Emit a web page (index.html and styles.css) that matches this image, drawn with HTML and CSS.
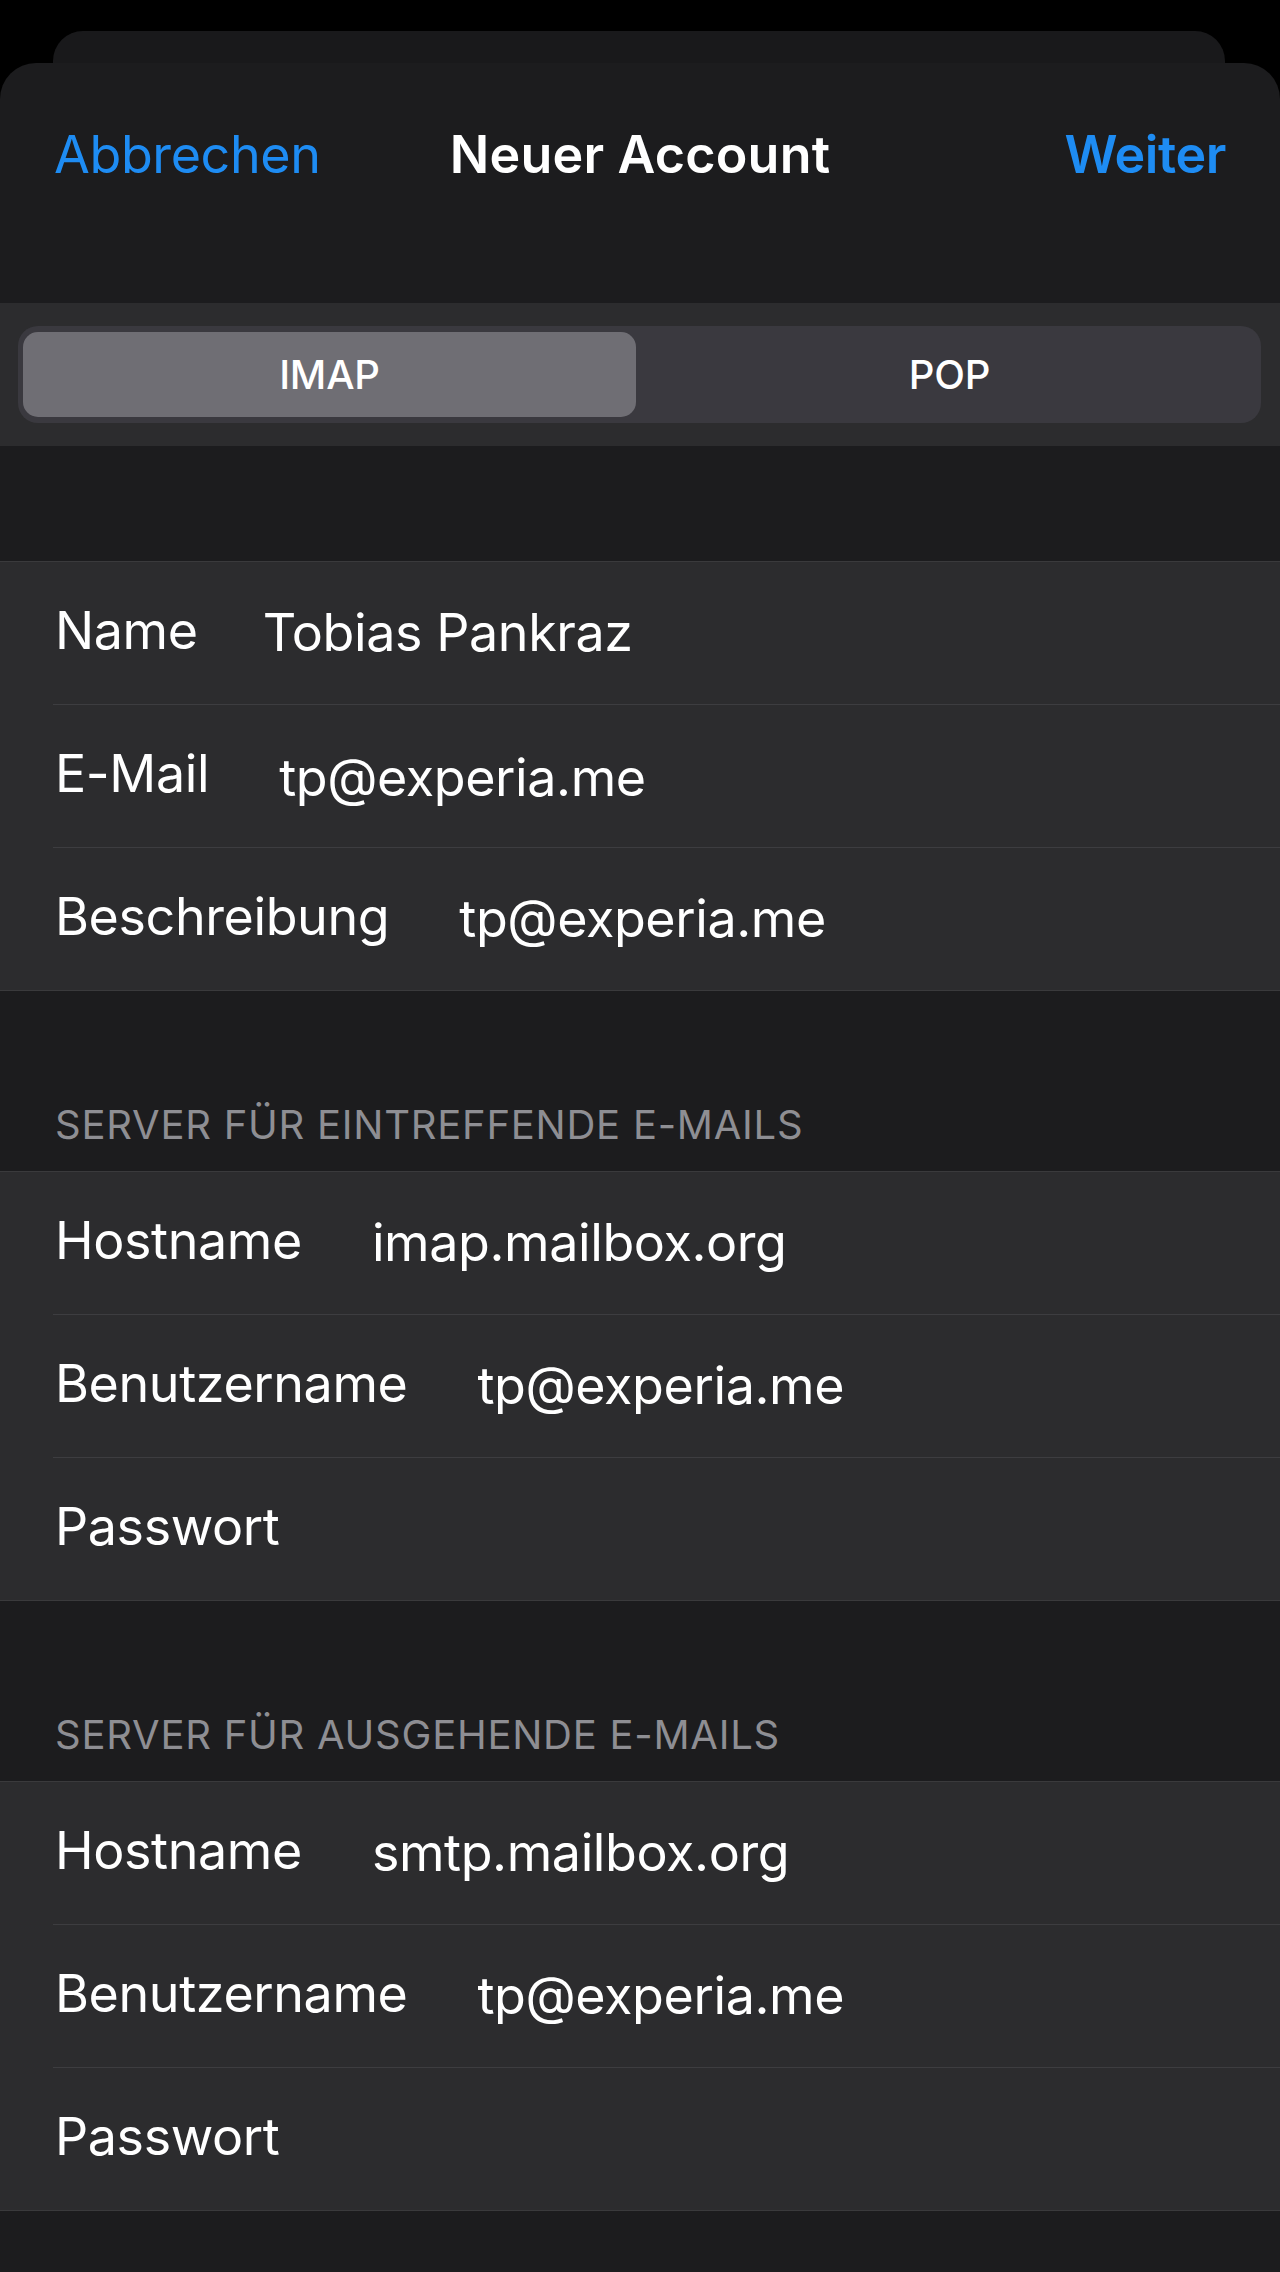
FILE: index.html
```html
<!DOCTYPE html>
<html lang="de">
<head>
<meta charset="utf-8">
<title>Neuer Account</title>
<link rel="stylesheet" href="styles.css">
</head>
<body>
<div class="back-card"></div>
<div class="sheet">
  <div class="nav">
    <span class="nav-btn left">Abbrechen</span>
    <span class="nav-title">Neuer Account</span>
    <span class="nav-btn strong right">Weiter</span>
  </div>
  <div class="seg-band">
    <div class="seg">
      <div class="seg-item selected">IMAP</div>
      <div class="seg-item">POP</div>
    </div>
  </div>
  <div class="spacer"></div>
  <div class="group">
    <div class="row"><span class="label">Name</span><span class="value name">Tobias Pankraz</span></div>
    <div class="row"><span class="label">E-Mail</span><span class="value low">tp@experia.me</span></div>
    <div class="row"><span class="label">Beschreibung</span><span class="value">tp@experia.me</span></div>
  </div>
  <div class="section-header">SERVER FÜR EINTREFFENDE E-MAILS</div>
  <div class="group">
    <div class="row"><span class="label">Hostname</span><span class="value">imap.mailbox.org</span></div>
    <div class="row"><span class="label">Benutzername</span><span class="value">tp@experia.me</span></div>
    <div class="row"><span class="label">Passwort</span></div>
  </div>
  <div class="section-header">SERVER FÜR AUSGEHENDE E-MAILS</div>
  <div class="group">
    <div class="row"><span class="label">Hostname</span><span class="value">smtp.mailbox.org</span></div>
    <div class="row"><span class="label">Benutzername</span><span class="value">tp@experia.me</span></div>
    <div class="row"><span class="label">Passwort</span></div>
  </div>
</div>
</body>
</html>
```
FILE: styles.css
```css
* { box-sizing: border-box; }
html, body {
  margin: 0;
  padding: 0;
  background: #000;
}
body {
  width: 1280px;
  height: 2272px;
  overflow: hidden;
  font-family: Inter, "Noto Sans", "Liberation Sans", sans-serif;
  color: #fff;
  padding-top: 31px;
}
.back-card {
  margin: 0 55px 0 53px;
  height: 32px;
  background: #19191b;
  border-radius: 30px 30px 0 0;
}
.sheet {
  background: #1c1c1e;
  border-radius: 36px 36px 0 0;
  height: 2209px;
}
.nav {
  height: 240px;
  padding: 60px 54px 0 54px;
  display: grid;
  grid-template-columns: 1fr auto 1fr;
  align-items: start;
}
.nav span {
  line-height: 64px;
  font-size: 52px;
  letter-spacing: -0.4px;
}
.nav-btn { color: #1e8cf3; }
.nav-btn.left { justify-self: start; }
.nav-btn.right { justify-self: end; }
.nav-btn.strong { font-weight: 600; }
.nav .nav-title { font-weight: 600; letter-spacing: 0.2px; }
.seg-band {
  background: #2c2c2e;
  height: 143px;
  padding: 23px 19px 23px 18px;
}
.seg {
  height: 97px;
  background: #3a393f;
  border-radius: 20px;
  padding: 6px 5px;
  display: flex;
}
.seg-item {
  flex: 1;
  display: flex;
  align-items: center;
  justify-content: center;
  font-size: 40px;
  font-weight: 500;
  letter-spacing: -0.2px;
  border-radius: 15px;
  color: #fff;
}
.seg-item.selected {
  background: #6f6e74;
  margin-right: 7px;
}
.spacer { height: 115px; }
.group {
  background: #2c2c2e;
  border-top: 1px solid #3a3a3c;
  border-bottom: 1px solid #3a3a3c;
}
.row {
  margin-left: 53px;
  padding-left: 2px;
  padding-bottom: 5px;
  height: 143px;
  display: flex;
  align-items: center;
  gap: 70px;
  border-top: 1px solid #3d3d40;
  font-size: 52px;
  letter-spacing: -0.4px;
}
.row:first-child { border-top: none; height: 142px; }
.value { position: relative; top: 2px; }
.value.low { top: 4px; }
.value.name { margin-left: -5px; }
.section-header {
  height: 180px;
  display: flex;
  align-items: flex-end;
  padding: 0 0 22px 55px;
  font-size: 40px;
  line-height: 48px;
  color: #8e8e93;
  letter-spacing: 0.75px;
}
```
